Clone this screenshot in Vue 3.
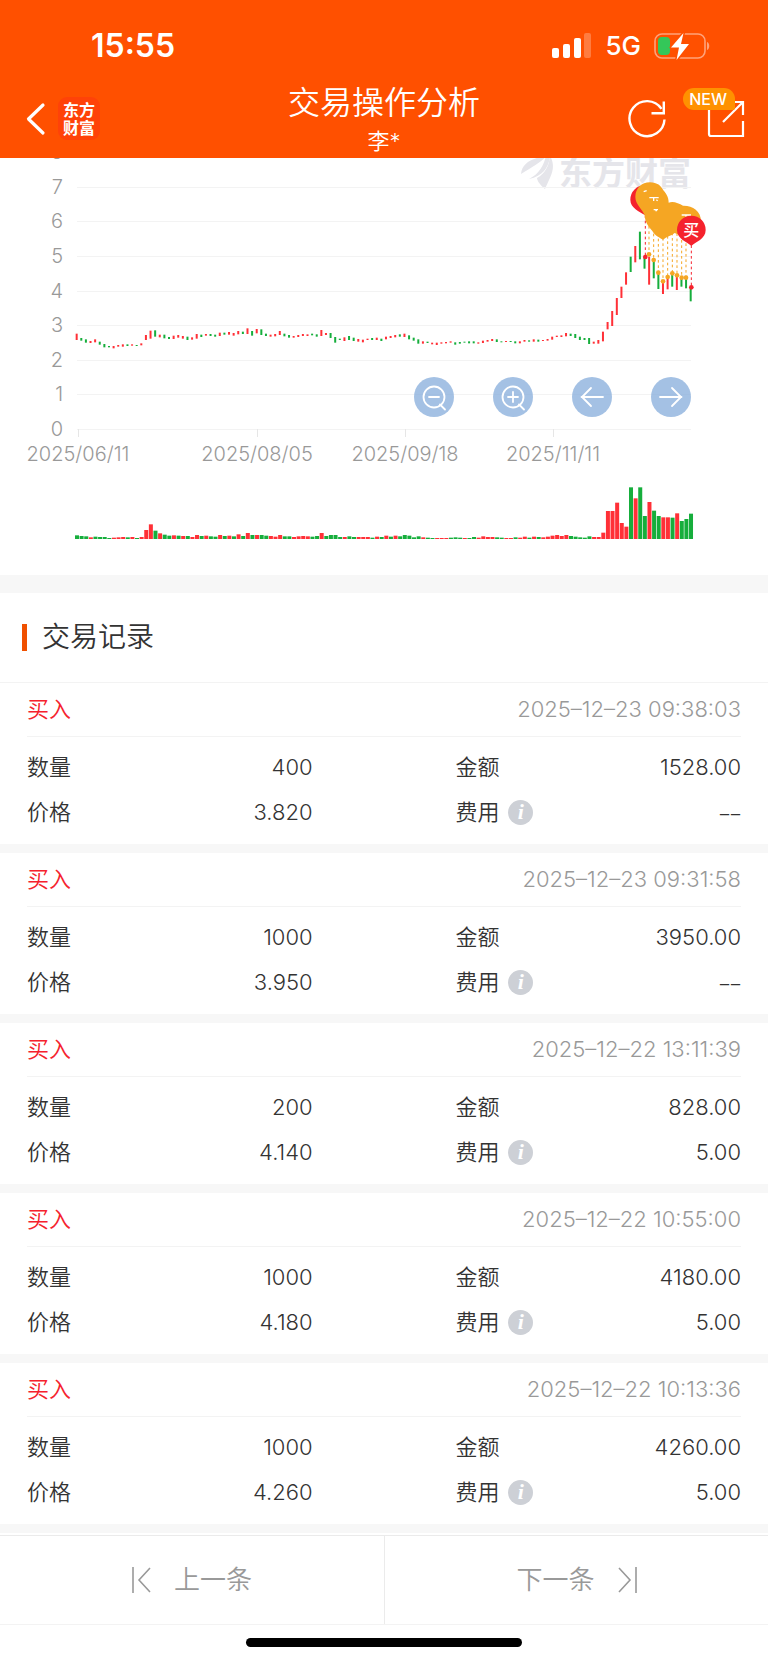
<script setup>
import { computed, ref } from 'vue';

const records = ref([
  { time: '2025–12–23 09:38:03', count: '400', price: '3.820', amount: '1528.00', fee: '––' },
  { time: '2025–12–23 09:31:58', count: '1000', price: '3.950', amount: '3950.00', fee: '––' },
  { time: '2025–12–22 13:11:39', count: '200', price: '4.140', amount: '828.00', fee: '5.00' },
  { time: '2025–12–22 10:55:00', count: '1000', price: '4.180', amount: '4180.00', fee: '5.00' },
  { time: '2025–12–22 10:13:36', count: '1000', price: '4.260', amount: '4260.00', fee: '5.00' },
]);

const priceTicks = [0, 1, 2, 3, 4, 5, 6, 7, 8];
const dateTicks = [
  { x: 78, label: '2025/06/11' },
  { x: 257, label: '2025/08/05' },
  { x: 405, label: '2025/09/18' },
  { x: 553, label: '2025/11/11' },
];

const tickY = (value) => Math.round(271 - value * 34.6);

// The plot itself is laid out at 3x density: one entry per trading day, "direction top bottom"
const PITCH = 13.85;
const FIRST_DAY = 231;
const BASELINE = 1167;

const candleSource = `
r551-570 g564-572 g568-578 r573-579 r568-577 g575-584 g582-592 g588-592 r588-595 r585-590
r583-590 g583-588 r583-587 g585-588 r580-586 r555-570 r542-566 g541-560 r554-562 g554-565
g561-567 r557-567 r555-563 r558-566 g560-570 r562-569 r552-566 g554-561 r552-557 g552-558
g554-560 r548-558 g548-554 r546-554 r549-557 r543-553 g545-552 r535-552 g543-557 r537-550
g538-555 g551-558 r554-560 r552-559 r543-555 g551-559 g555-563 r558-563 r555-561 r552-558
r553-558 g551-556 g553-560 r540-558 r549-555 g549-564 g561-578 g566-570 r562-573 g558-570
g563-573 r567-575 r569-577 r566-570 g564-570 r563-570 g566-573 r560-568 r558-564 r555-562
g553-560 r551-561 g556-568 g563-572 g568-581 r574-581 g575-579 r578-583 r578-585 r577-581
r576-580 r574-578 g577-584 g576-581 g575-578 g574-580 g574-580 r577-581 r572-579 r570-575
r567-573 g568-576 g574-577 r573-576 g573-576 g574-580 r574-580 r570-575 g571-575 r568-575
g569-575 r570-573 r567-572 r560-569 r557-561 r556-561 r549-559 g551-558 g552-564 g560-570
g564-570 g564-582 r575-581 r570-581 r545-574 r516-538 r483-528 r444-495 r410-444 r367-404
g320-366 r288-337 g245-328 g320-356 r320-404 g330-385 g368-417 r394-432 r382-418 g371-410
r377-420 g383-410 g384-415 g414-454`;

const volumeSource = `
g11 g9 g8 r5 g7 g6 g6 g3 r4 r5 r6 g5 r6 g3 r6 r27 r44 g25 r17 g13 g10 r11 g10 r9 g9 r6 r12 g9
r10 g8 g7 r12 g9 r10 g8 r14 g9 r18 g12 r12 g12 g10 r9 r7 r12 g8 g8 r6 r8 r9 r8 g7 g9 r18 g9
g12 g12 g6 r6 g8 g6 r6 r6 r6 g4 r7 g6 r10 g7 r10 g8 g12 g10 g5 g8 r5 g4 g3 r3 r3 r3 g4 g5 g4
r3 g3 g6 r4 r8 r6 r6 g5 g4 r3 r3 g5 r4 r7 g4 r7 g6 r5 r7 r10 r12 r9 r12 g9 g7 g5 g4 g8 r6 r6
r19 r84 r84 r109 r48 r37 g155 r122 g155 g69 r111 g85 g69 r65 r65 g64 r77 g54 g60 g76`;

const dayX = (index) => FIRST_DAY + index * PITCH;

const candles = computed(() =>
  candleSource.trim().split(/\s+/).map((item, index) => {
    const [top, bottom] = item.slice(1).split('-').map(Number);
    return { up: item[0] === 'r', x: dayX(index) - 4, y: top, height: bottom - top };
  })
);

const volumes = computed(() =>
  volumeSource.trim().split(/\s+/).map((item, index) => {
    const height = Number(item.slice(1));
    return { up: item[0] === 'r', x: dayX(index) - 6, y: BASELINE - height, height };
  })
);

const trades = [
  { x: 1936, from: 196, to: 321, buy: true },
  { x: 1947, from: 228, to: 313 },
  { x: 1961, from: 235, to: 330 },
  { x: 1975, from: 250, to: 368 },
  { x: 1989, from: 264, to: 394 },
  { x: 2003, from: 258, to: 381 },
  { x: 2017, from: 248, to: 370 },
  { x: 2031, from: 250, to: 376 },
  { x: 2045, from: 270, to: 383 },
  { x: 2058, from: 280, to: 383 },
  { x: 2074, from: 286, to: 412, buy: true },
];
</script>

<template>
  <div class="page">
    <header class="header">
      <div class="status">
        <span class="status__time">15:55</span>
        <div class="status__right">
          <svg class="status__signal" viewBox="0 0 40 26" aria-hidden="true">
            <rect x="0" y="15" width="7" height="10" rx="2" fill="#fff" />
            <rect x="11" y="11" width="7" height="14" rx="2" fill="#fff" />
            <rect x="22" y="5" width="7" height="20" rx="2" fill="#fff" />
            <rect x="32" y="0" width="7" height="25" rx="2" fill="#fff" opacity="0.25" />
          </svg>
          <span class="status__network">5G</span>
          <svg class="status__battery" viewBox="0 0 57 28" aria-hidden="true">
            <rect x="1" y="2" width="50" height="24" rx="7" fill="none" stroke="#ffa27a" stroke-width="1.6" />
            <path d="M53 10c3 1 3 7 0 8z" fill="#ffa27a" />
            <rect x="4" y="5" width="12" height="18" rx="4" fill="#34c759" />
            <path d="M29.500 1 17 15.500h8L22.500 28 35 12h-8z" fill="#fff" stroke="#ff5000" stroke-width="3" paint-order="stroke" stroke-linejoin="round" />
          </svg>
        </div>
      </div>

      <nav class="nav">
        <div class="nav__left">
          <button type="button" class="icon-button" aria-label="返回">
            <svg width="23" height="34" viewBox="0 0 23 34">
              <path d="M20 3 5.500 17 20 31" fill="none" stroke="#fff" stroke-width="3.200" stroke-linecap="round" stroke-linejoin="round" />
            </svg>
          </button>
          <span class="brand">东方<br />财富</span>
        </div>
        <div class="nav__center">
          <h1 class="nav__title">交易操作分析</h1>
          <p class="nav__subtitle">李*</p>
        </div>
        <div class="nav__right">
          <button type="button" class="icon-button" aria-label="刷新">
            <svg width="40" height="40" viewBox="0 0 40 40">
              <path d="M34.500 9.800A17.500 17.500 0 1 0 37.500 20.500" fill="none" stroke="#fff" stroke-width="2.400" />
              <path d="M36.800 2.500v11.800H24.500" fill="none" stroke="#fff" stroke-width="2.400" />
            </svg>
          </button>
          <button type="button" class="icon-button icon-button--share" aria-label="分享">
            <svg width="38" height="38" viewBox="0 0 38 38">
              <path d="M2 10v24a2 2 0 0 0 2 2h32V21" fill="none" stroke="#fff" stroke-width="2.200" />
              <path d="M24 2h12v13M36 2 16 22" fill="none" stroke="#fff" stroke-width="2.200" />
            </svg>
            <span class="new-badge">NEW</span>
          </button>
        </div>
      </nav>
    </header>

    <section class="chart" aria-label="交易走势图">
      <svg class="chart__svg" viewBox="0 0 768 417">
        <g fill="#e5e5ea">
          <path d="M521 16C522 5 532 0 546-2C544 2 534 8 521 16z" />
          <path d="M529 21C541 15 544 5 546-2L550-2C549 8 544 18 529 21z" />
          <path d="M545 31C539 26 537 22 537 20C546 15 549 7 550-2C557 10 550 19 545 31z" />
          <text x="559" y="27" class="chart__watermark">东方财富</text>
        </g>

        <g v-for="tick in priceTicks" :key="tick">
          <line v-if="tick < 8" x1="77" x2="691" :y1="tickY(tick)" :y2="tickY(tick)" class="chart__line" />
          <text x="63" :y="tickY(tick) + 7" text-anchor="end" class="chart__label">{{ tick }}</text>
        </g>
        <g v-for="tick in dateTicks" :key="tick.label">
          <line :x1="tick.x" :x2="tick.x" y1="271" y2="279" class="chart__line chart__line--tick" />
          <text :x="tick.x" y="303" text-anchor="middle" class="chart__label">{{ tick.label }}</text>
        </g>

        <g transform="translate(0 -8) scale(0.333333)">
          <rect v-for="(bar, index) in candles" :key="`c${index}`" :x="bar.x" :y="bar.y" width="6" :height="bar.height" :class="bar.up ? 'up' : 'down'" />
          <rect v-for="(bar, index) in volumes" :key="`v${index}`" :x="bar.x" :y="bar.y" width="12" :height="bar.height" :class="bar.up ? 'up' : 'down'" />

          <g v-for="trade in trades" :key="trade.x" :class="trade.buy ? 'trade trade--buy' : 'trade'">
            <line :x1="trade.x" :x2="trade.x" :y1="trade.from" :y2="trade.to" />
            <circle :cx="trade.x" :cy="trade.to" r="7" />
          </g>

          <path d="M1936 196C1918 184 1891 174 1891 149A43 43 0 0 1 1934 106L1960 150z" fill="#f5222d" />
          <path d="M1906 141C1906 115 1925 97 1950 97C1972 97 1983 108 1990 121C1997 129 2006 140 2006 158C2018 152 2036 159 2049 167C2077 166 2103 183 2103 213L2070 258L2045 258L2024 249C2012 258 2000 260 1989 269C1979 263 1966 258 1957 243C1944 228 1935 216 1934 196C1928 178 1906 164 1906 141z" fill="#f5a623" />
          <path d="M1948 143H1976M1961 143V153M1969 149L1973 152M1961 179H1974M1966 182H1971M1931 125L1940 122M2045 195H2073M2058 195V200" fill="none" stroke="#fff" stroke-width="4" />
          <path d="M2074 288C2062 275 2031 268 2031 240A43 43 0 0 1 2117 240C2117 268 2086 275 2074 288z" fill="#f5222d" />
          <text x="2074" y="257" text-anchor="middle" class="chart__buy">买</text>
        </g>
      </svg>

      <div class="chart__tools">
        <button type="button" class="tool" aria-label="缩小">
          <svg viewBox="0 0 40 40"><circle cx="20" cy="20" r="10.500" /><path d="M15 20h10M26 27.500l5 5" /></svg>
        </button>
        <button type="button" class="tool" aria-label="放大">
          <svg viewBox="0 0 40 40"><circle cx="20" cy="20" r="10.500" /><path d="M15 20h10M20 15v10M26 27.500l5 5" /></svg>
        </button>
        <button type="button" class="tool" aria-label="向左">
          <svg viewBox="0 0 40 40"><path d="M31 20H9.500M19 11l-9 9 9 9" /></svg>
        </button>
        <button type="button" class="tool" aria-label="向右">
          <svg viewBox="0 0 40 40"><path d="M9 20h21.500M21 11l9 9-9 9" /></svg>
        </button>
      </div>
    </section>

    <main class="records">
      <h2 class="records__title">交易记录</h2>
      <article v-for="record in records" :key="record.time" class="record">
        <div class="record__head">
          <span class="record__type">买入</span>
          <time class="record__time">{{ record.time }}</time>
        </div>
        <dl class="record__body">
          <div class="field">
            <dt>数量</dt>
            <dd>{{ record.count }}</dd>
          </div>
          <div class="field field--right">
            <dt>金额</dt>
            <dd>{{ record.amount }}</dd>
          </div>
          <div class="field">
            <dt>价格</dt>
            <dd>{{ record.price }}</dd>
          </div>
          <div class="field field--right">
            <dt>
              费用
              <button type="button" class="info" aria-label="费用说明">i</button>
            </dt>
            <dd :class="{ 'field__empty': record.fee === '––' }">{{ record.fee }}</dd>
          </div>
        </dl>
      </article>
    </main>

    <footer class="footer">
      <div class="pager">
        <button type="button" class="pager__button">
          <svg width="19" height="26" viewBox="0 0 19 26"><path d="M1 0v26M18 1 7 13l11 12" /></svg>
          上一条
        </button>
        <button type="button" class="pager__button">
          下一条
          <svg width="19" height="26" viewBox="0 0 19 26"><path d="M18 0v26M1 1l11 12L1 25" /></svg>
        </button>
      </div>
      <div class="home-indicator"></div>
    </footer>
  </div>
</template>

<style>
body {
  margin: 0;
  background: #fff;
}
</style>

<style scoped>
.page {
  min-height: 100vh;
  background: #fff;
  color: #333;
  font-family: Inter, 'Noto Sans CJK SC', sans-serif;
  font-weight: 350;
  line-height: 1.2;
}

button {
  padding: 0;
  border: 0;
  background: none;
  color: inherit;
  font: inherit;
  cursor: pointer;
}

svg {
  display: block;
}

.header {
  background: #ff5000;
  color: #fff;
}

.status {
  display: flex;
  justify-content: space-between;
  align-items: center;
  box-sizing: border-box;
  height: 84px;
  padding: 8px 57px 0 91px;
}

.status__time {
  font-size: 32px;
  font-weight: 600;
}

.status__right {
  display: flex;
  align-items: center;
  gap: 13px;
}

.status__signal {
  width: 40px;
  height: 26px;
}

.status__network {
  font-size: 26px;
  font-weight: 500;
}

.status__battery {
  width: 57px;
  height: 28px;
}

.nav {
  display: grid;
  grid-template-columns: 1fr auto 1fr;
  align-items: center;
  padding: 0 23px 5px;
}

.nav__left,
.nav__right {
  display: flex;
  align-items: center;
}

.nav__left {
  gap: 12px;
}

.nav__right {
  justify-content: flex-end;
  gap: 40px;
}

.nav__center {
  text-align: center;
}

.nav__title {
  margin: 0 0 7px;
  font-size: 32px;
  line-height: 38px;
  font-weight: 350;
}

.nav__subtitle {
  margin: 0;
  font-size: 22px;
  line-height: 24px;
}

.icon-button--share {
  position: relative;
}

.brand {
  display: block;
  padding: 4px 5px 3px;
  border-radius: 9px;
  background: #ff4208;
  font-size: 16px;
  line-height: 18px;
  font-weight: 700;
}

.new-badge {
  position: absolute;
  right: 10px;
  bottom: 28px;
  padding: 0 8px 0 6px;
  border-radius: 11px 11px 2px 11px;
  background: #ff9100;
  font-size: 16px;
  line-height: 22px;
  font-weight: 500;
}

.chart {
  position: relative;
}

.chart__svg {
  width: 100%;
  height: auto;
}

.chart__watermark {
  font-size: 33px;
  font-weight: 700;
}

.chart__line {
  stroke: #f3f3f3;
  stroke-width: 1;
  shape-rendering: crispEdges;
}

.chart__line--tick {
  stroke: #e6e6e6;
}

.chart__label {
  fill: #999;
  font-size: 20px;
  font-weight: 300;
}

.chart__buy {
  fill: #fff;
  font-size: 48px;
  font-weight: 500;
}

.up {
  fill: #ff3037;
}

.down {
  fill: #16ae3c;
}

.trade {
  fill: #f5a623;
  stroke: #f5a623;
}

.trade line {
  stroke-width: 3;
  stroke-dasharray: 8 8;
}

.trade circle {
  stroke: none;
}

.trade--buy {
  fill: #f5222d;
  stroke: #f5222d;
}

.chart__tools {
  position: absolute;
  top: 52.5%;
  right: 10%;
  display: flex;
  gap: 39px;
}

.tool {
  width: 40px;
  height: 40px;
  border-radius: 50%;
  background: rgba(135, 174, 220, 0.76);
}

.tool svg {
  fill: none;
  stroke: #fff;
  stroke-width: 1.8;
  stroke-linecap: round;
}

.records {
  border-top: 18px solid #f7f7f7;
}

.records__title {
  display: flex;
  align-items: center;
  gap: 15px;
  height: 89px;
  margin: 0;
  padding: 0 22px;
  border-bottom: 1px solid #f3f3f3;
  font-size: 28px;
  font-weight: 350;
}

.records__title::before {
  content: '';
  width: 5px;
  height: 27px;
  background: #f05000;
}

.record {
  padding: 0 27px;
  border-bottom: 9px solid #f7f7f7;
  font-size: 22px;
}

.record__head {
  display: flex;
  justify-content: space-between;
  align-items: center;
  height: 53px;
  border-bottom: 1px solid #f3f3f3;
}

.record__type {
  color: #f5222d;
}

.record__time {
  color: #999;
  font-weight: 300;
}

.record__body {
  display: grid;
  grid-template-columns: 2fr 1fr 2fr;
  margin: 0;
  padding: 8px 0 9px;
}

.field {
  display: flex;
  justify-content: space-between;
  align-items: center;
  height: 45px;
}

.field--right {
  grid-column: 3;
}

.field dt {
  display: flex;
  align-items: center;
  gap: 9px;
}

.field dd {
  margin: 0;
  font-weight: 300;
}

.field .field__empty {
  font-family: 'Noto Sans', sans-serif;
}

.info {
  width: 25px;
  height: 25px;
  border-radius: 50%;
  background: #cdd0d6;
  color: #fff;
  font-family: 'Liberation Serif', serif;
  font-size: 22px;
  font-style: italic;
  font-weight: 700;
  line-height: 24px;
}

.footer {
  padding-bottom: 15px;
}

.pager {
  display: grid;
  grid-template-columns: 1fr 1fr;
  margin-top: 2px;
  border-top: 1px solid #ebebeb;
  border-bottom: 1px solid #f3f3f3;
}

.pager__button {
  display: flex;
  justify-content: center;
  align-items: center;
  gap: 23px;
  height: 88px;
  color: #999;
  font-size: 26px;
}

.pager__button + .pager__button {
  border-left: 1px solid #ebebeb;
}

.pager__button svg {
  fill: none;
  stroke: #999;
  stroke-width: 1.6;
}

.home-indicator {
  width: 36%;
  height: 9px;
  margin: 13px auto 0;
  border-radius: 5px;
  background: #000;
}
</style>
